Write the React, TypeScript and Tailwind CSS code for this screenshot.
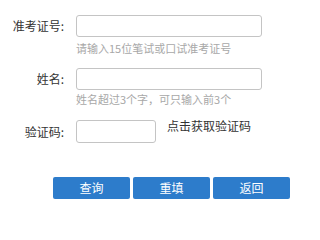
const font = "font-['Noto_Sans_CJK_SC',sans-serif]";

function Row({ label, children }: { label: string; children: React.ReactNode }) {
  return (
    <div className="flex items-center">
      <div className="w-[64px] text-right text-[12px] text-[#333]">{label}</div>
      <div className="ml-[12px] flex items-start">{children}</div>
    </div>
  );
}

export default function App() {
  return (
    <div className={`w-[310px] h-[210px] bg-white pt-[15px] ${font}`}>
      <Row label="准考证号:">
        <input className="w-[186px] h-[22px] border border-[#c4c4c4] rounded-[3px] outline-none" />
      </Row>
      <p className="ml-[76px] mt-[4px] text-[11px] leading-[14px] text-[#a8a8a8]">请输入15位笔试或口试准考证号</p>

      <div className="mt-[13px]">
        <Row label="姓名:">
          <input className="w-[186px] h-[22px] border border-[#c4c4c4] rounded-[3px] outline-none" />
        </Row>
      </div>
      <p className="ml-[76px] mt-[2px] text-[11px] leading-[14px] text-[#a8a8a8]">姓名超过3个字，可只输入前3个</p>

      <div className="mt-[14px]">
        <Row label="验证码:">
          <input className="w-[80px] h-[23px] border border-[#c4c4c4] rounded-[3px] outline-none" />
          <span className="ml-[11px] -mt-[2px] text-[12px] leading-[16px] text-[#333] cursor-pointer">点击获取验证码</span>
        </Row>
      </div>

      <div className="mt-[34px] ml-[53px] flex gap-[3px]">
        {["查询", "重填", "返回"].map((t) => (
          <button
            key={t}
            className="w-[77px] h-[22px] rounded-[2px] bg-[#2d7ccb] text-white text-[12px] leading-[22px]"
          >
            {t}
          </button>
        ))}
      </div>
    </div>
  );
}
